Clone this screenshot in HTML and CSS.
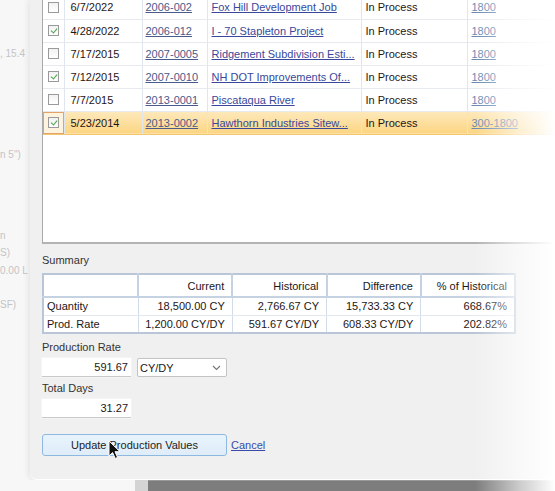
FILE: index.html
```html
<!DOCTYPE html>
<html lang="en">
<head>
  <meta charset="UTF-8" />
  <title>Update Production Values</title>
  <link rel="stylesheet" href="styles.css">
</head>
<body>
  <div class="screen">
    <div class="behind">
      <div class="ghost g1">, 15.4</div>
      <div class="ghost g2">n 5")</div>
      <div class="ghost g3">n</div>
      <div class="ghost g4">S)</div>
      <div class="ghost g5">0.00 L</div>
      <div class="ghost g6">SF)</div>
    </div>

    <div class="dialog">
      <div class="grid">
        <table class="jobs">
          <colgroup>
            <col style="width:21px"><col style="width:78px"><col style="width:65px">
            <col style="width:154px"><col style="width:106px"><col>
          </colgroup>
          <tr>
            <td class="cb"><span class="box"></span></td>
            <td>6/7/2022</td>
            <td><a class="job" href="#">2006-002</a></td>
            <td><a class="name" href="#">Fox Hill Development Job</a></td>
            <td>In Process</td>
            <td><a class="num" href="#">1800</a></td>
          </tr>
          <tr>
            <td class="cb"><span class="box checked"></span></td>
            <td>4/28/2022</td>
            <td><a class="job" href="#">2006-012</a></td>
            <td><a class="name" href="#">I - 70 Stapleton Project</a></td>
            <td>In Process</td>
            <td><a class="num" href="#">1800</a></td>
          </tr>
          <tr>
            <td class="cb"><span class="box"></span></td>
            <td>7/17/2015</td>
            <td><a class="job" href="#">2007-0005</a></td>
            <td><a class="name" href="#">Ridgement Subdivision Esti...</a></td>
            <td>In Process</td>
            <td><a class="num" href="#">1800</a></td>
          </tr>
          <tr>
            <td class="cb"><span class="box checked"></span></td>
            <td>7/12/2015</td>
            <td><a class="job" href="#">2007-0010</a></td>
            <td><a class="name" href="#">NH DOT Improvements Of...</a></td>
            <td>In Process</td>
            <td><a class="num" href="#">1800</a></td>
          </tr>
          <tr>
            <td class="cb"><span class="box"></span></td>
            <td>7/7/2015</td>
            <td><a class="job" href="#">2013-0001</a></td>
            <td><a class="name" href="#">Piscataqua River</a></td>
            <td>In Process</td>
            <td><a class="num" href="#">1800</a></td>
          </tr>
          <tr class="selected">
            <td class="cb"><span class="box checked"></span></td>
            <td>5/23/2014</td>
            <td><a class="job" href="#">2013-0002</a></td>
            <td><a class="name" href="#">Hawthorn Industries Sitew...</a></td>
            <td>In Process</td>
            <td><a class="num" href="#">300-1800</a></td>
          </tr>
        </table>
      </div>

      <div class="label summary-label">Summary</div>
      <table class="summary">
        <tr class="head">
          <th></th><th>Current</th><th>Historical</th><th>Difference</th><th>% of Historical</th>
        </tr>
        <tr>
          <td class="rowname">Quantity</td><td>18,500.00 CY</td><td>2,766.67 CY</td><td>15,733.33 CY</td><td>668.67%</td>
        </tr>
        <tr>
          <td class="rowname">Prod. Rate</td><td>1,200.00 CY/DY</td><td>591.67 CY/DY</td><td>608.33 CY/DY</td><td>202.82%</td>
        </tr>
      </table>

      <div class="label">Production Rate</div>
      <div class="field-row">
        <div class="input">591.67</div>
        <div class="select">
          <span>CY/DY</span>
          <svg width="9" height="6" viewBox="0 0 9 6"><path d="M1 1l3.5 3.5L8 1" fill="none" stroke="#777" stroke-width="1.1"/></svg>
        </div>
      </div>

      <div class="label">Total Days</div>
      <div class="field-row">
        <div class="input">31.27</div>
      </div>

      <div class="actions">
        <button class="btn">Update Production Values</button>
        <a class="cancel" href="#">Cancel</a>
        <svg class="cursor" width="14" height="20" viewBox="0 0 14 20">
          <path d="M1 1v15l3.6-3.4 2.6 5.8 2.4-1-2.6-5.7H12z" fill="#111" stroke="#fff" stroke-width="1"/>
        </svg>
      </div>
    </div>
  </div>

  <div class="under">
    <div class="under-light"></div>
    <div class="under-edge"></div>
    <div class="under-dark"></div>
  </div>

  <div class="fade"></div>
</body>
</html>
```

FILE: styles.css
```css
* {
  box-sizing: border-box;
  margin: 0;
  padding: 0;
}
body {
  width: 555px;
  height: 491px;
  overflow: hidden;
  position: relative;
  background: #f7f7f7;
  font-family: Tahoma, "Liberation Sans", sans-serif;
  font-size: 11px;
  color: #1e1616;
}
.screen {
  display: flex;
  height: 480px;
}
.behind {
  width: 30px;
  flex-shrink: 0;
  color: #c4c4c4;
  white-space: nowrap;
  font-size: 10px;
}
.ghost {
  height: 14px;
  line-height: 14px;
}
.g1 { margin-top: 47px; }
.g2 { margin-top: 87px; }
.g3 { margin-top: 67px; }
.g4 { margin-top: 3px; }
.g5 { margin-top: 4px; }
.g6 { margin-top: 20px; }

.dialog {
  flex: 1;
  background: #f0f0f0;
  border-bottom-left-radius: 7px;
  box-shadow: -2px 0 6px rgba(0, 0, 0, 0.08);
  border-bottom: 1px solid #fff;
  padding-left: 12px;
  overflow: hidden;
}

/* job grid */
.grid {
  margin-top: -5px;
  height: 249px;
  background: #fff;
  border: 1px solid #a9a9a9;
  border-bottom: 2px solid #b3b3b3;
  border-right: none;
}
.jobs {
  border-collapse: collapse;
  table-layout: fixed;
  width: 513px;
}
.jobs td {
  height: 23px;
  border-bottom: 1px solid #e6e9ee;
  border-right: 1px solid #dfe6ef;
  white-space: nowrap;
  overflow: hidden;
  padding-left: 6px;
}
.jobs td:nth-child(3) { padding-left: 3px; }
.jobs td:nth-child(4) { padding-left: 4px; }
.jobs td:nth-child(5) { padding-left: 4px; }
.jobs td:nth-child(6) { padding-left: 4px; }
.jobs td.cb {
  padding: 0;
  text-align: center;
}
.jobs a { text-decoration: underline; }
.job { color: #4a5a8a; }
.name { color: #39489a; }
.num { color: #6a89b2; }

.box {
  display: inline-block;
  width: 11px;
  height: 11px;
  border: 1px solid #9a9a9a;
  background: linear-gradient(#f2f2f2, #ffffff);
  vertical-align: middle;
  position: relative;
  top: -1px;
}
.box.checked::after {
  content: "";
  position: absolute;
  left: 3px;
  top: 1px;
  width: 3px;
  height: 5px;
  border: solid #4aa34a;
  border-width: 0 1.5px 1.5px 0;
  transform: rotate(40deg);
}
.jobs tr.selected td {
  background: linear-gradient(#fde9bc, #fcd583);
  border-bottom: 1px solid #f2c774;
}
.jobs tr.selected td.cb {
  background: #fdf3de;
  box-shadow: inset 0 0 0 1px #e3a266;
}

/* summary */
.label {
  height: 15px;
  line-height: 15px;
  color: #333;
  margin-top: 4px;
}
.summary-label {
  margin-top: 9px;
}
.summary {
  margin-top: 5px;
  margin-bottom: 6px;
  border-collapse: collapse;
  border: 2px solid #b9c6d7;
  background: #fff;
  width: 474px;
  table-layout: fixed;
}
.summary th,
.summary td {
  text-align: right;
  padding-right: 7px;
  height: 18px;
  border-right: 1px solid #d3dde9;
  border-bottom: 1px solid #e3e9f1;
  font-weight: normal;
  white-space: nowrap;
}
.summary tr.head th {
  height: 23px;
  border-right: 2px solid #c5d2e2;
  border-bottom: 2px solid #c5d2e2;
}
.summary th:first-child,
.summary td.rowname {
  text-align: left;
  padding-left: 3px;
  width: 95px;
}

/* form fields */
.field-row {
  display: flex;
  gap: 6px;
  margin-top: 3px;
}
.input {
  width: 89px;
  height: 19px;
  line-height: 19px;
  background: #fff;
  text-align: right;
  padding-right: 3px;
  border-bottom: 1px solid #c9c9c9;
  box-shadow: 0 0 0 1px #f4f4f4;
}
.select {
  width: 90px;
  height: 19px;
  background: #fff;
  border: 1px solid #c3c3c3;
  border-radius: 2px;
  display: flex;
  align-items: center;
  justify-content: space-between;
  padding: 0 5px 0 2px;
}

.actions {
  display: flex;
  align-items: center;
  gap: 4px;
  margin-top: 16px;
  position: relative;
}
.btn {
  width: 185px;
  height: 22px;
  font-family: inherit;
  font-size: 11px;
  color: #222;
  background: linear-gradient(#e8f3fc, #dfedf9);
  border: 1px solid #8fb8e0;
  border-radius: 3px;
}
.cancel {
  color: #3a4aa8;
  font-size: 11px;
}
.cursor {
  position: absolute;
  left: 66px;
  top: 6px;
}

/* window below */
.under {
  display: flex;
  height: 11px;
}
.under-light {
  width: 135px;
  background: #f7f7f7;
}
.under-edge {
  width: 13px;
  background: #d4d4d4;
}
.under-dark {
  flex: 1;
  background: #7d7d7d;
  border-top: 1px solid #9a9a9a;
}

.fade {
  position: absolute;
  top: 0;
  right: 0;
  width: 80px;
  height: 100%;
  background: linear-gradient(to right, rgba(255, 255, 255, 0), rgba(255, 255, 255, 0.6) 55%, #fff);
  pointer-events: none;
}
```
